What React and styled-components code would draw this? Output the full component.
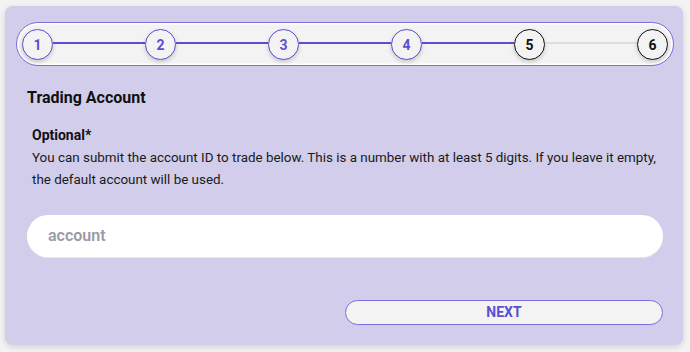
import React from "react";
import styled, { createGlobalStyle } from "styled-components";

const GlobalStyle = createGlobalStyle`
  * {
    box-sizing: border-box;
  }
  body {
    margin: 0;
    background: #f3f3f3;
    font-family: Roboto, "Liberation Sans", Arial, sans-serif;
    color: #111;
  }
`;

const purple = "#5a4fd2";

const Page = styled.div`
  padding: 6px 7px 7px 5px;
`;

const Card = styled.div`
  width: 678px;
  height: 339px;
  background: #d1cdea;
  border-radius: 8px;
  box-shadow: 0 2px 6px rgba(0, 0, 0, 0.14);
  padding: 16px 9px 0 11px;
  display: flex;
  flex-direction: column;
`;

const Stepper = styled.div`
  height: 44px;
  display: flex;
  align-items: center;
  padding: 0 5px;
  background: #f3f3f3;
  border: 1px solid #7a70dc;
  border-radius: 22px;
  box-shadow: inset 0 0 0 1.5px #fff;
`;

const Circle = styled.div`
  width: 31px;
  height: 31px;
  flex: none;
  border-radius: 50%;
  border: 1.5px solid ${(p) => (p.done ? purple : "#111")};
  color: ${(p) => (p.done ? purple : "#111")};
  background: #f3f3f3;
  box-shadow: 0 2px 4px rgba(0, 0, 0, 0.18);
  display: flex;
  align-items: center;
  justify-content: center;
  font-size: 14px;
  font-weight: 700;
  padding-top: 1px;
`;

const Connector = styled.div`
  flex: 1;
  height: 1.5px;
  margin-top: -2px;
  background: ${(p) => (p.done ? purple : "#dedede")};
`;

const Body = styled.div`
  flex: 1;
  display: flex;
  flex-direction: column;
  padding: 0 11px;
`;

const Title = styled.h2`
  margin: 22px 0 0;
  font-size: 16px;
  line-height: 20px;
  font-weight: 700;
`;

const Section = styled.div`
  margin-top: 16px;
  padding-left: 5px;
  line-height: 22.5px;
`;

const Label = styled.div`
  font-size: 14px;
  font-weight: 700;
`;

const Text = styled.p`
  margin: 0;
  font-size: 13.4px;
  color: #1a1a1a;
`;

const Input = styled.input`
  margin-top: 23px;
  width: 100%;
  height: 42px;
  border: none;
  outline: none;
  border-radius: 21px;
  background: #fff;
  padding: 0 21px;
  font-family: inherit;
  font-size: 16px;
  font-weight: 600;
  box-shadow: 0 1px 1px rgba(255, 255, 255, 0.5);

  &::placeholder {
    color: #9a9aa7;
  }
`;

const Footer = styled.div`
  display: flex;
  justify-content: flex-end;
  margin-top: 43px;
`;

const NextButton = styled.button`
  width: 318px;
  height: 25px;
  border-radius: 13px;
  border: 1px solid #7a70dc;
  background: #f3f3f3;
  color: ${purple};
  font-family: inherit;
  font-size: 14px;
  font-weight: 700;
  cursor: pointer;
`;

const steps = [1, 2, 3, 4, 5, 6];
const current = 4;

export default function App() {
  return (
    <>
      <GlobalStyle />
      <Page>
        <Card>
          <Stepper>
            {steps.map((s, i) => (
              <React.Fragment key={s}>
                {i > 0 && <Connector done={s <= current + 1} />}
                <Circle done={s <= current}>{s}</Circle>
              </React.Fragment>
            ))}
          </Stepper>
          <Body>
            <Title>Trading Account</Title>
            <Section>
              <Label>Optional*</Label>
              <Text>
                You can submit the account ID to trade below. This is a number
                with at least 5 digits. If you leave it empty, the default
                account will be used.
              </Text>
            </Section>
            <Input placeholder="account" />
            <Footer>
              <NextButton>NEXT</NextButton>
            </Footer>
          </Body>
        </Card>
      </Page>
    </>
  );
}
